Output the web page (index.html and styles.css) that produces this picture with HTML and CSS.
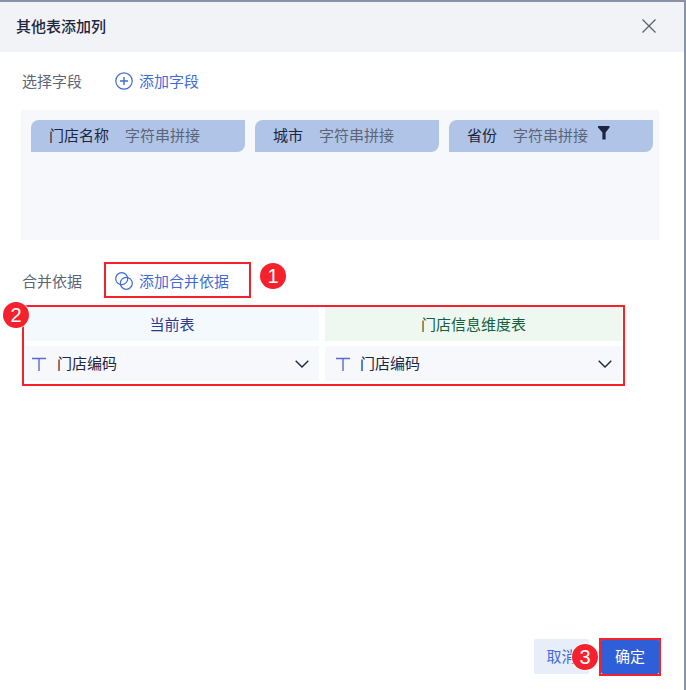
FILE: index.html
```html
<!DOCTYPE html>
<html lang="zh-CN">
<head>
    <meta charset="UTF-8">
    <title>其他表添加列</title>
    <link rel="stylesheet" href="styles.css">
</head>
<body>
    <div class="dialog">
        <div class="dialog-header">
            <div class="dialog-title">其他表添加列</div>
            <svg class="close-icon" width="14" height="14" viewBox="0 0 14 14"><path d="M.5.5l13 13M13.5.5l-13 13" stroke="#5b5f6b" stroke-width="1.2" fill="none"/></svg>
        </div>
        <div class="dialog-body">
            <div class="section-row">
                <div class="section-label">选择字段</div>
                <div class="link-btn">
                    <svg width="18" height="18" viewBox="0 0 18 18"><circle cx="9" cy="9" r="8.2" stroke="#3f6bd8" stroke-width="1.2" fill="none"/><path d="M9 5v8M5 9h8" stroke="#3f6bd8" stroke-width="1.4" fill="none"/></svg>
                    <span>添加字段</span>
                </div>
            </div>
            <div class="field-panel">
                <div class="chip chip-name"><span class="chip-name-text">门店名称</span><span class="chip-sub">字符串拼接</span></div>
                <div class="chip chip-city"><span class="chip-name-text">城市</span><span class="chip-sub">字符串拼接</span></div>
                <div class="chip chip-prov"><span class="chip-name-text">省份</span><span class="chip-sub">字符串拼接</span>
                    <svg class="filter-icon" width="12" height="14" viewBox="0 0 12 14"><path d="M0 0h11.5v1.6L7.6 6.4V13.5H4.4V6.4L0 1.6z" fill="#1d2540"/></svg>
                </div>
            </div>
            <div class="section-row merge-row">
                <div class="section-label">合并依据</div>
                <div class="link-btn">
                    <svg width="18" height="18" viewBox="0 0 18 18"><circle cx="6.7" cy="6.7" r="6" stroke="#3f6bd8" stroke-width="1.2" fill="none"/><circle cx="11.3" cy="11.3" r="6" stroke="#3f6bd8" stroke-width="1.2" fill="none"/></svg>
                    <span>添加合并依据</span>
                </div>
            </div>
            <div class="merge-grid">
                <div class="merge-head head-current">当前表</div>
                <div class="merge-head head-other">门店信息维度表</div>
                <div class="merge-select">
                    <svg class="type-icon" width="14" height="14" viewBox="0 0 14 14"><path d="M0 1.5h14M7 1.5V14" stroke="#5a67d8" stroke-width="1.4" fill="none"/></svg>
                    <span>门店编码</span>
                    <svg class="chevron" width="14" height="8" viewBox="0 0 14 8"><path d="M.7.7L7 7l6.3-6.3" stroke="#1d2540" stroke-width="1.4" fill="none"/></svg>
                </div>
                <div class="merge-select">
                    <svg class="type-icon" width="14" height="14" viewBox="0 0 14 14"><path d="M0 1.5h14M7 1.5V14" stroke="#5a67d8" stroke-width="1.4" fill="none"/></svg>
                    <span>门店编码</span>
                    <svg class="chevron" width="14" height="8" viewBox="0 0 14 8"><path d="M.7.7L7 7l6.3-6.3" stroke="#1d2540" stroke-width="1.4" fill="none"/></svg>
                </div>
            </div>
        </div>
        <div class="dialog-footer">
            <button class="btn btn-cancel">取消</button>
            <button class="btn btn-ok">确定</button>
        </div>

        <div class="mark mark-link"></div>
        <div class="mark mark-grid"></div>
        <div class="mark mark-ok"></div>
        <div class="badge badge-1">1</div>
        <div class="badge badge-2">2</div>
        <div class="badge badge-3">3</div>
    </div>
</body>
</html>
```

FILE: styles.css
```css
:root {
    --primary: #2f5fd8;
    --link: #3f6bd8;
    --dark: #1d2540;
    --muted: #5c6478;
    --red: #f5222d;
}

html, body { margin: 0; padding: 0; height: 100%; background: #fff; }
body { font-family: "Noto Sans CJK SC", "Noto Sans", sans-serif; font-size: 15px; color: var(--dark); overflow: hidden; }

.dialog {
    position: relative;
    width: 686px;
    height: 690px;
    box-sizing: border-box;
    border-top: 2px solid #8a93a5;
    border-right: 2px solid #8a93a5;
    background: #fff;
    display: flex;
    flex-direction: column;
}
.dialog-header {
    height: 50px;
    flex: none;
    background: #f1f3f7;
    display: flex;
    align-items: center;
    justify-content: space-between;
    padding: 0 28px 0 16px;
}
.dialog-title { font-weight: 500; line-height: 20px; margin-top: -2px; }
.close-icon { margin-top: -2px; }

.dialog-body { flex: 1; padding: 20px 25px 0 21px; }
.section-row { display: flex; align-items: center; height: 20px; }
.section-label { width: 94px; padding-left: 1px; box-sizing: border-box; color: var(--muted); line-height: 20px; margin-top: -2px; }
.link-btn { display: flex; align-items: center; gap: 6px; color: var(--link); }
.link-btn span { margin-top: -3px; }
.link-btn svg { margin-top: -2px; }

.field-panel {
    margin-top: 18px;
    height: 130px;
    box-sizing: border-box;
    padding: 10px 6px 0 10px;
    background: #f7f8fc;
    display: flex;
    gap: 10px;
    align-items: flex-start;
}
.chip {
    height: 32px;
    background: #afc4e6;
    border-radius: 8px 0 8px 0;
    display: flex;
    align-items: center;
    padding: 0 0 3px 18px;
    box-sizing: border-box;
}
.chip-name { width: 214px; }
.chip-city { width: 184px; }
.chip-prov { width: 204px; }
.chip-name-text { color: var(--dark); margin-right: 16px; }
.chip-sub { color: var(--muted); }
.filter-icon { margin: -3px 0 0 10px; }

.merge-row { margin-top: 32px; }
.merge-grid {
    margin: 15px 0 0 4px;
    width: 597px;
    display: grid;
    grid-template-columns: 294px 297px;
    column-gap: 6px;
    grid-template-rows: 34px 35px;
    row-gap: 5px;
}
.merge-head { display: flex; align-items: center; justify-content: center; padding-bottom: 2px; box-sizing: border-box; }
.head-current { background: #f4f9fe; color: #2a3a8c; }
.head-other { background: #eef8f0; color: #14603a; }
.merge-select {
    background: #f7f8fc;
    display: flex;
    align-items: center;
    padding: 0 10px 0 7px;
}
.merge-select + .merge-select { padding-left: 11px; }
.merge-select span { margin: -2px 0 0 11px; flex: 1; }
.merge-select + .merge-select span { margin-left: 10px; }

.dialog-footer {
    flex: none;
    height: 51px;
    padding-right: 25px;
    display: flex;
    justify-content: flex-end;
    align-items: flex-start;
    gap: 12px;
}
.btn {
    height: 35px;
    border: none;
    border-radius: 2px;
    font: inherit;
    padding: 0 0 2px;
}
.btn-cancel { width: 55px; background: #e8edfa; color: var(--link); }
.btn-ok { width: 58px; background: var(--primary); color: #fff; }

/* annotations painted over the screenshot */
.mark { position: absolute; border: 2px solid var(--red); box-sizing: border-box; }
.mark-link { left: 104px; top: 260px; width: 147px; height: 36px; }
.mark-grid { left: 22px; top: 303px; width: 603px; height: 81px; }
.mark-ok { left: 599px; top: 636px; width: 62px; height: 38px; }
.badge {
    position: absolute;
    width: 26px;
    height: 26px;
    border-radius: 50%;
    background: var(--red);
    box-shadow: 0 0 0 1px #ffffffaa;
    color: #fff;
    font-family: "Liberation Sans", sans-serif;
    font-size: 20px;
    line-height: 26px;
    text-align: center;
}
.badge-1 { left: 260px; top: 261px; }
.badge-2 { left: 3px; top: 300px; }
.badge-3 { left: 572px; top: 642px; }
```
